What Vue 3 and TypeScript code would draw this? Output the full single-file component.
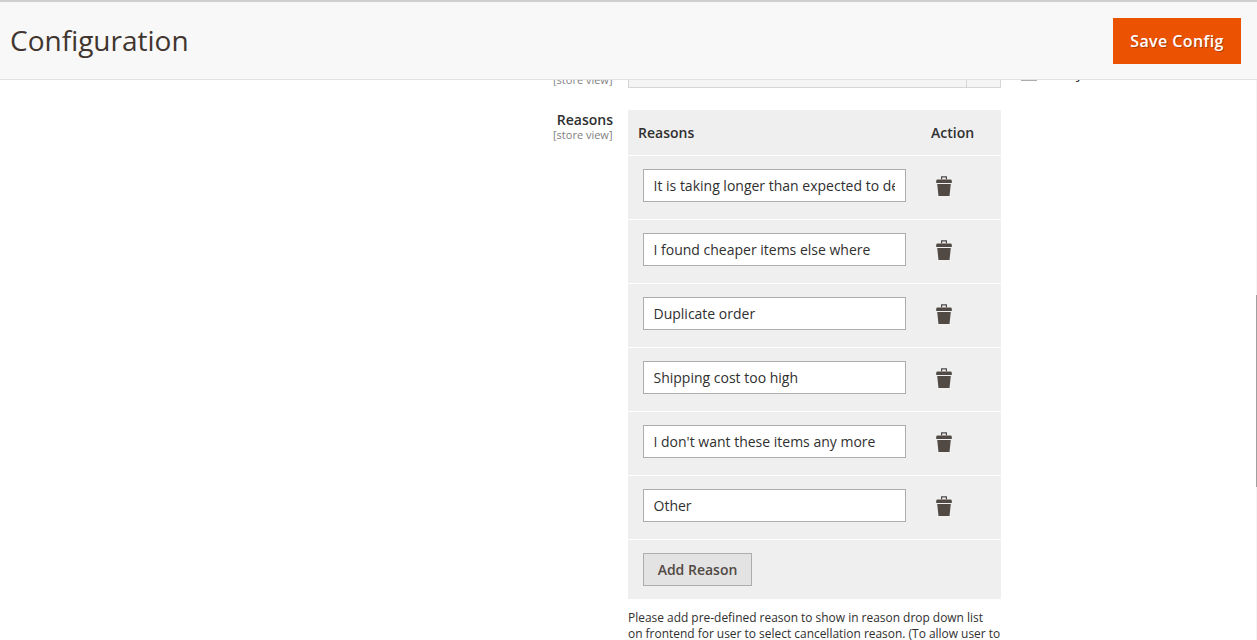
<script setup lang="ts">
const reasons: string[] = [
  'It is taking longer than expected to deliver',
  'I found cheaper items else where',
  'Duplicate order',
  'Shipping cost too high',
  "I don't want these items any more",
  'Other',
]
</script>

<template>
  <div class="page">
    <header class="topbar">
      <h1 class="title">Configuration</h1>
      <button class="save" type="button">Save Config</button>
    </header>

    <main class="form">
      <div class="field">
        <div class="label"><span class="scope">[store view]</span></div>
        <div class="value">
          <div class="select"><span class="arrow"></span></div>
        </div>
        <label class="inherit"><span class="check"></span><span class="inherit-text">Use system value</span></label>
      </div>

      <div class="field">
        <div class="label">
          <strong class="name">Reasons</strong>
          <span class="scope">[store view]</span>
        </div>
        <div class="value">
          <table class="grid">
            <thead>
              <tr>
                <th class="col-reason">Reasons</th>
                <th class="col-action">Action</th>
              </tr>
            </thead>
            <tbody>
              <tr v-for="reason in reasons" :key="reason">
                <td class="cell-input"><input class="text" type="text" :value="reason" /></td>
                <td class="cell-action">
                  <svg class="trash" width="16" height="20" viewBox="0 0 16 20" aria-hidden="true">
                    <path fill="#514943" d="M5 3.4V0.3h6v3.1H9.8V1.5H6.2v1.9z" />
                    <path fill="#514943" d="M1 3.4h14l0.8 1.1v2.6H0.2V4.5z" />
                    <path fill="#514943" d="M1.2 7.9h13.6L13.5 20h-11z" />
                  </svg>
                </td>
              </tr>
            </tbody>
            <tfoot>
              <tr>
                <td class="cell-add" colspan="2"><button class="add" type="button">Add Reason</button></td>
              </tr>
            </tfoot>
          </table>
          <p class="note">Please add pre-defined reason to show in reason drop down list<br />on frontend for user to select cancellation reason. (To allow user to</p>
        </div>
      </div>
    </main>

    <div class="scrollbar"><span class="thumb"></span></div>
  </div>
</template>

<style>
html,
body {
  margin: 0;
  background: #fff;
}
</style>

<style scoped>
.page {
  position: relative;
  height: 640px;
  overflow: hidden;
  background: #fff;
  font-family: "Open Sans", "Liberation Sans", sans-serif;
  color: #303030;
}
.topbar {
  position: absolute;
  top: 0;
  left: 0;
  right: 0;
  z-index: 2;
  height: 80px;
  box-sizing: border-box;
  display: flex;
  align-items: center;
  justify-content: space-between;
  padding: 1px 16px 0 10px;
  background: #f8f8f8;
  border-top: 2px solid #cfcfcf;
  border-bottom: 1px solid #e3e3e3;
}
.title {
  margin: 0 0 3px;
  font-size: 28px;
  font-weight: 400;
  line-height: 36px;
  color: #41362f;
}
.save {
  width: 128px;
  height: 46px;
  padding: 0;
  border: 0;
  background: #eb5202;
  color: #fff;
  font: 600 16px "Open Sans", sans-serif;
  letter-spacing: 0.4px;
  text-shadow: 1px 1px 0 rgba(0, 0, 0, 0.25);
}
.form {
  padding-top: 55px;
  display: flex;
  flex-direction: column;
  gap: 22px;
}
.field {
  display: flex;
  align-items: flex-start;
}
.label {
  width: 613px;
  display: flex;
  flex-direction: column;
  align-items: flex-end;
}
.name {
  font-size: 14px;
  font-weight: 600;
  line-height: 19px;
}
.scope {
  font-size: 11px;
  line-height: 12px;
  margin-right: 0.5px;
  color: #808080;
}
.field:first-child .label {
  padding-top: 19px;
}
.value {
  width: 373px;
  margin-left: 15px;
}
.select {
  height: 33px;
  box-sizing: border-box;
  display: flex;
  justify-content: flex-end;
  border: 1px solid #d6d6d6;
  background: #f5f5f5;
}
.arrow {
  width: 33px;
  border-left: 1px solid #d6d6d6;
}
.inherit {
  margin-left: 20px;
  display: flex;
  align-items: flex-start;
  padding-top: 10px;
  font-size: 14px;
  line-height: 16px;
}
.check {
  width: 14px;
  height: 14px;
  margin-right: 4px;
  border: 1px solid #adadad;
}
.inherit-text {
  color: #303030;
}
.grid {
  width: 373px;
  border-collapse: collapse;
  table-layout: fixed;
  background: #efefef;
}
th {
  height: 45px;
  padding: 0 0 0 10px;
  box-sizing: border-box;
  text-align: left;
  font-size: 14px;
  font-weight: 600;
  color: #303030;
  border-bottom: 1px solid #fff;
}
.col-reason {
  width: 293px;
}
.col-action {
  width: 80px;
}
tbody td {
  height: 64px;
  box-sizing: border-box;
  padding: 0;
  vertical-align: top;
  border-bottom: 1px solid #fff;
}
tbody td.cell-input {
  padding: 13px 0 0 15px;
}
tbody td.cell-action {
  padding-top: 20px;
}
.text {
  display: block;
  width: 263px;
  height: 33px;
  box-sizing: border-box;
  padding: 0 10px 0 9.5px;
  border: 1px solid #adadad;
  border-radius: 0;
  background: #fff;
  color: #303030;
  font: 400 14px "Open Sans", sans-serif;
  outline: none;
}
.trash {
  display: block;
  margin-left: 15px;
}
.cell-add {
  height: 60px;
  box-sizing: border-box;
  padding: 13px 0 0 15px;
  vertical-align: top;
}
.add {
  display: block;
  width: 109px;
  height: 33px;
  padding: 0;
  border: 1px solid #adadad;
  border-radius: 0;
  background: #e3e3e3;
  color: #514943;
  font: 600 14px "Open Sans", sans-serif;
}
.note {
  margin: 11px -4px 0 0;
  font-size: 11.95px;
  line-height: 16px;
  color: #303030;
}
.scrollbar {
  position: absolute;
  top: 80px;
  right: 0;
  bottom: 0;
  width: 1px;
  background: #f4f4f4;
}
.thumb {
  position: absolute;
  top: 215px;
  left: 0;
  width: 1px;
  height: 192px;
  background: #a0a0a0;
}
</style>
